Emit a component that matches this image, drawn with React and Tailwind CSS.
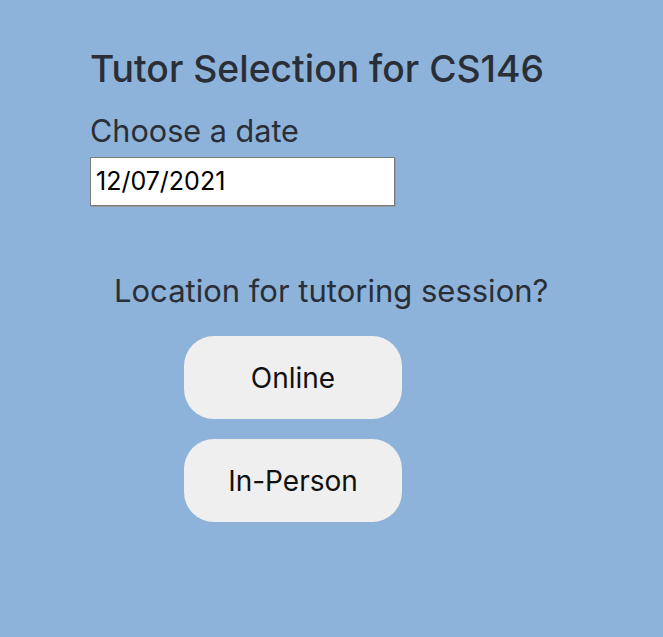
export default function App() {
  return (
    <div className="min-h-[637px] bg-[#8eb3da] font-['Inter',sans-serif] text-[#2a2f37]">
      <div className="pl-[90px] pt-[47px]">
        <h1 className="text-[37.3px] leading-[44px] font-medium">Tutor Selection for CS146</h1>
        <div className="mt-[22px] text-[30.6px] leading-[36px]">Choose a date</div>
        <div className="mt-[8px] flex h-[49px] w-[305px] items-center border border-[#7a7a7a] bg-white pl-[5px] text-[25px] text-black shadow-[1px_1px_0_#9a9a9a]">
          12/07/2021
        </div>
        <div className="mt-[66px] pl-[24px] text-[31px] leading-[38px]">Location for tutoring session?</div>
        <div className="mt-[26px] ml-[94px] flex w-[218px] flex-col gap-[20px]">
          <button className="h-[83px] w-[218px] rounded-[30px] bg-[#efefef] text-[28px] text-[#111]">Online</button>
          <button className="h-[83px] w-[218px] rounded-[30px] bg-[#efefef] text-[28px] text-[#111]">In-Person</button>
        </div>
      </div>
    </div>
  );
}
